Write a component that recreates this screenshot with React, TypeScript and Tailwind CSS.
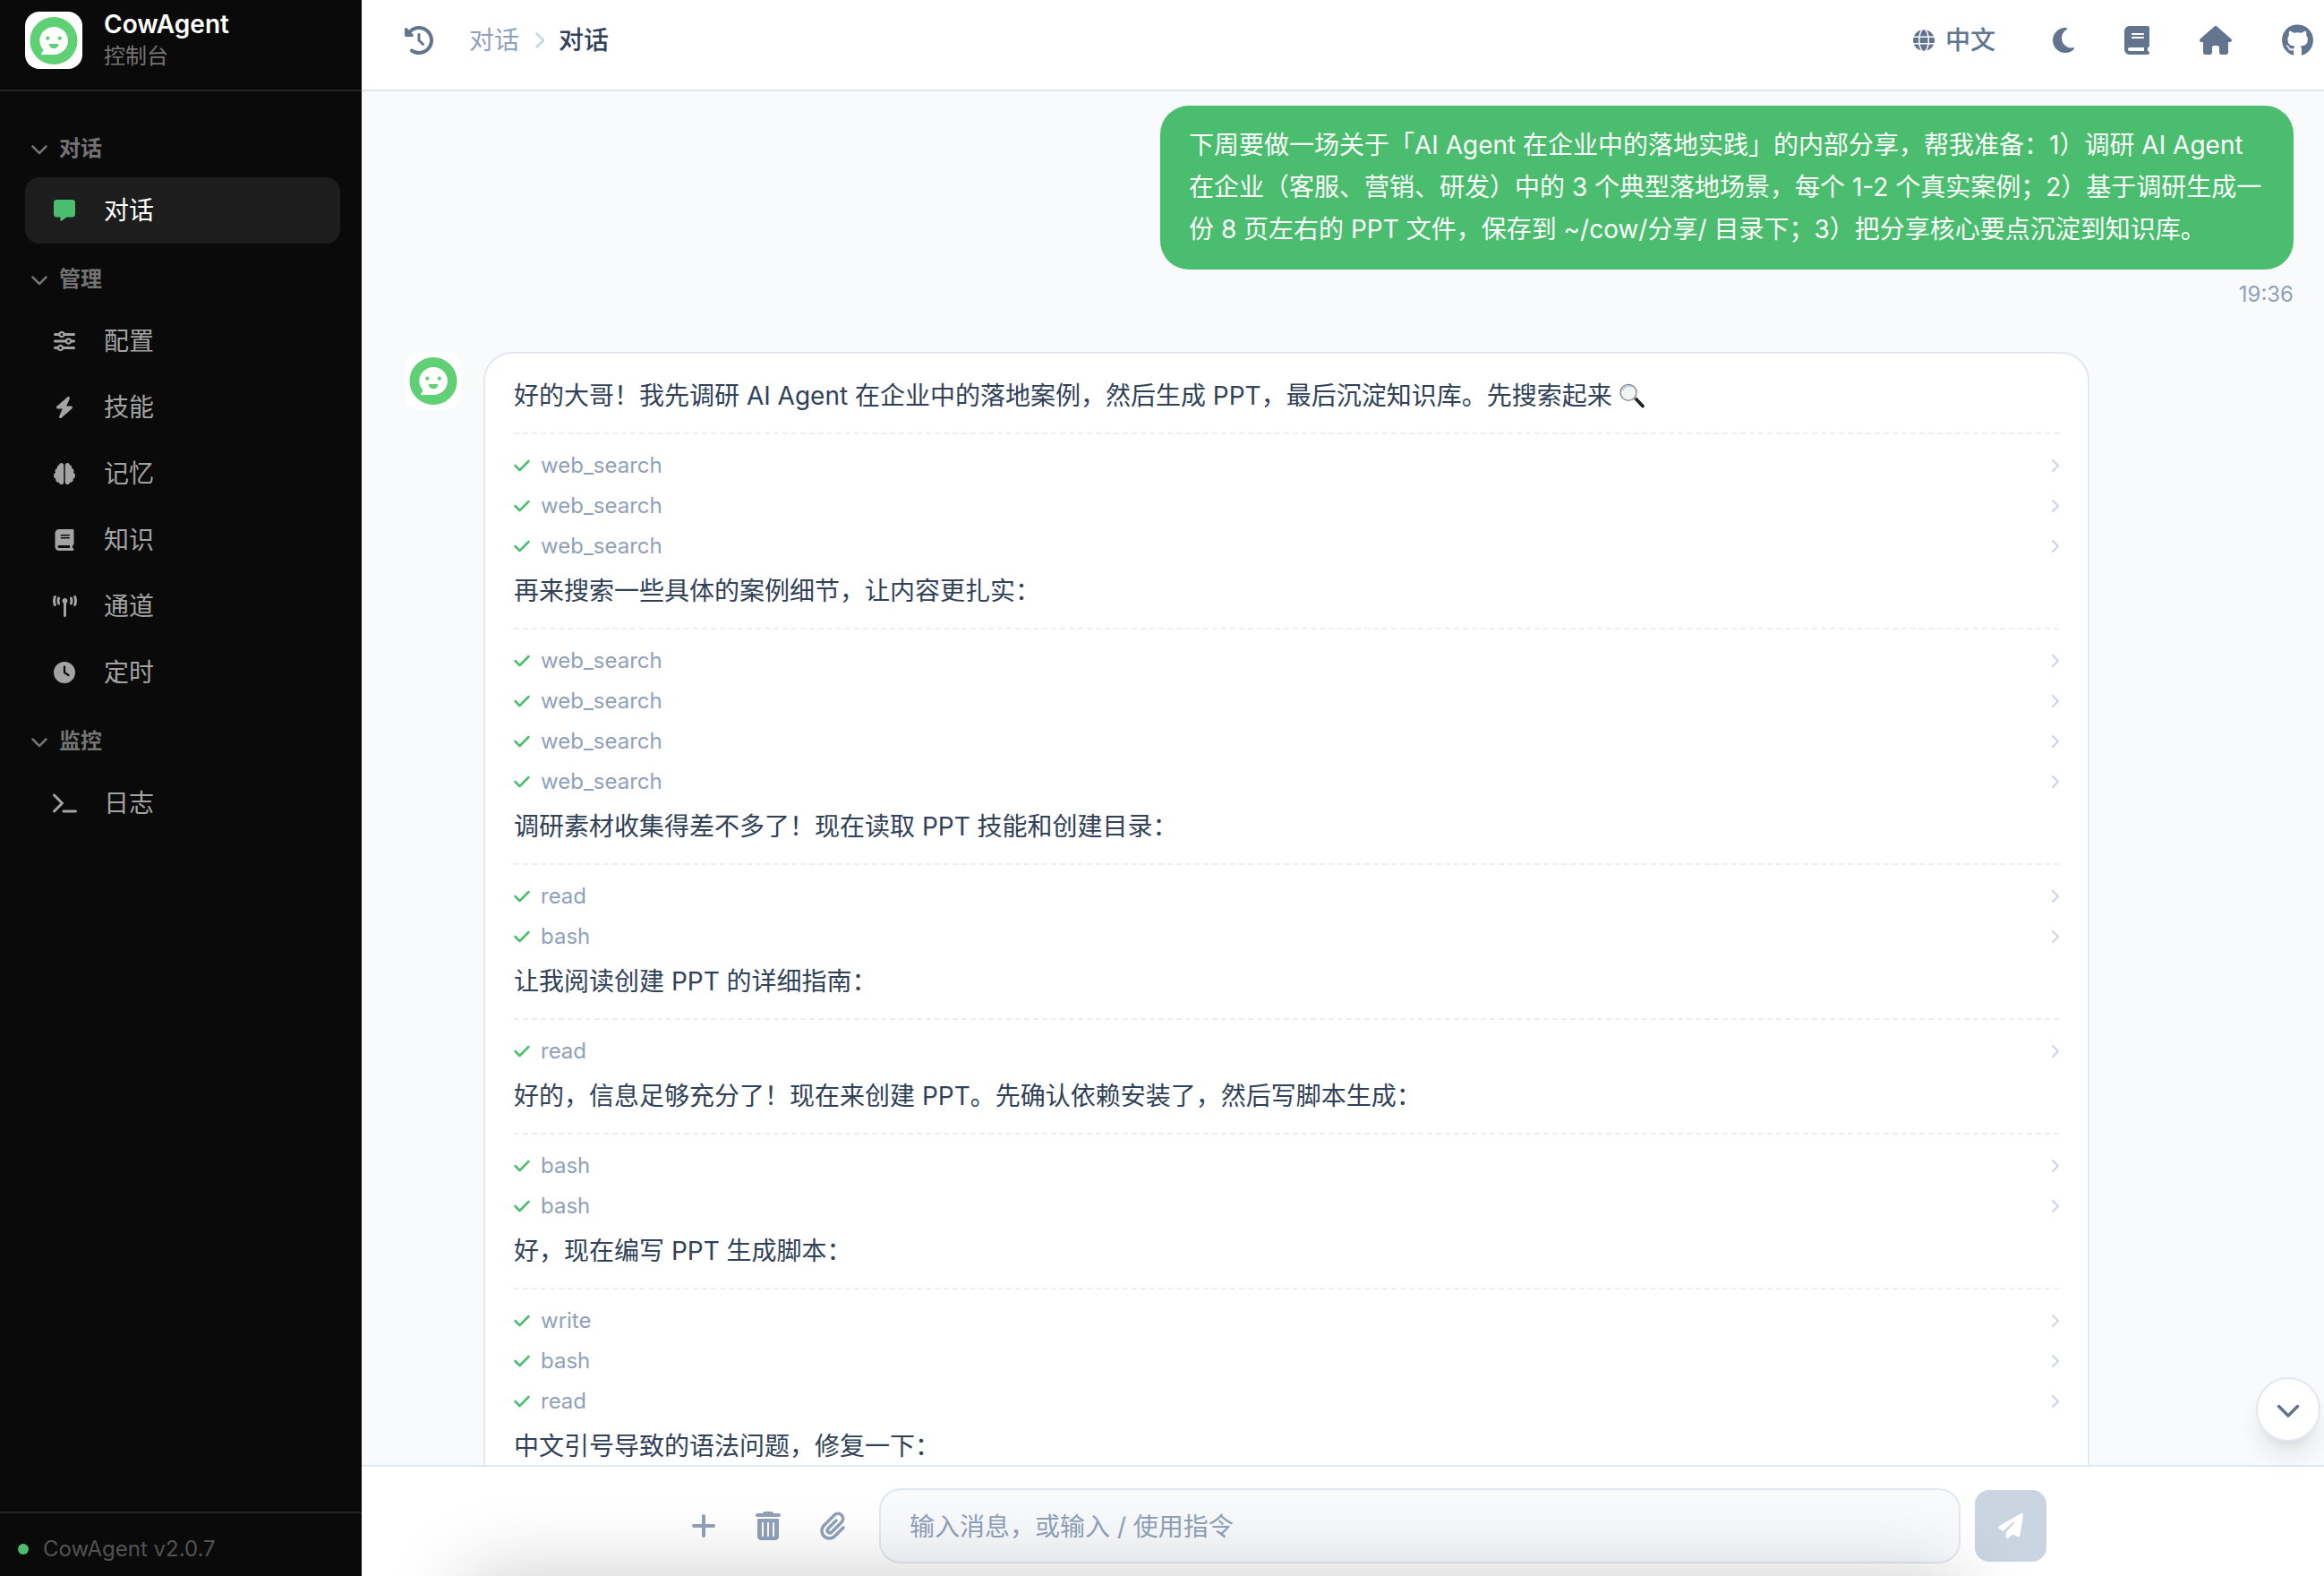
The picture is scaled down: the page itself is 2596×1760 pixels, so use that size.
import type { IconType } from 'react-icons'
import {
  FaBolt,
  FaBook,
  FaBrain,
  FaCheck,
  FaChevronDown,
  FaChevronRight,
  FaClock,
  FaClockRotateLeft,
  FaGithub,
  FaGlobe,
  FaHouse,
  FaMessage,
  FaMoon,
  FaPaperclip,
  FaPaperPlane,
  FaPlus,
  FaSliders,
  FaTerminal,
  FaTowerBroadcast,
  FaTrashCan,
} from 'react-icons/fa6'

interface NavItem {
  label: string
  icon: IconType
  wide?: boolean
  active?: boolean
}

interface NavGroup {
  title: string
  items: NavItem[]
}

const NAV: NavGroup[] = [
  { title: '对话', items: [{ label: '对话', icon: FaMessage, active: true }] },
  {
    title: '管理',
    items: [
      { label: '配置', icon: FaSliders },
      { label: '技能', icon: FaBolt },
      { label: '记忆', icon: FaBrain },
      { label: '知识', icon: FaBook },
      { label: '通道', icon: FaTowerBroadcast, wide: true },
      { label: '定时', icon: FaClock },
    ],
  },
  { title: '监控', items: [{ label: '日志', icon: FaTerminal, wide: true }] },
]

interface Step {
  text: string
  emoji?: boolean
  tools: string[]
}

const STEPS: Step[] = [
  {
    text: '好的大哥！我先调研 AI Agent 在企业中的落地案例，然后生成 PPT，最后沉淀知识库。先搜索起来',
    emoji: true,
    tools: ['web_search', 'web_search', 'web_search'],
  },
  {
    text: '再来搜索一些具体的案例细节，让内容更扎实：',
    tools: ['web_search', 'web_search', 'web_search', 'web_search'],
  },
  { text: '调研素材收集得差不多了！现在读取 PPT 技能和创建目录：', tools: ['read', 'bash'] },
  { text: '让我阅读创建 PPT 的详细指南：', tools: ['read'] },
  { text: '好的，信息足够充分了！现在来创建 PPT。先确认依赖安装了，然后写脚本生成：', tools: ['bash', 'bash'] },
  { text: '好，现在编写 PPT 生成脚本：', tools: ['write', 'bash', 'read'] },
  { text: '中文引号导致的语法问题，修复一下：', tools: [] },
]

function Logo() {
  return (
    <svg viewBox="0 0 64 64" className="size-16 shrink-0 rounded-2xl bg-white" role="img" aria-label="CowAgent">
      <circle cx="32" cy="32.5" r="26.5" fill="#5fd074" />
      <path
        d="M32.2 17c8.8 0 15.8 6.9 15.8 15.5S41 48 32.2 48H18.6c-.8 0-1-.7-.5-1.300.9-1 2-2.200 2.200-3.700.1-.6-.2-1-.6-1.500C17.600 39.200 16.300 36 16.300 32.500 16.300 23.900 23.400 17 32.200 17Z"
        fill="#fff"
      />
      <circle cx="25.300" cy="29.700" r="2.100" fill="#5fd074" />
      <circle cx="38.800" cy="29.700" r="2.100" fill="#5fd074" />
      <path d="M27.600 36h9c.6 0 .9.4.8.9-.5 2.500-2.600 4.200-5.300 4.200s-4.800-1.700-5.300-4.200c-.1-.5.200-.9.800-.9Z" fill="#5fd074" />
    </svg>
  )
}

function Magnifier() {
  return (
    <svg viewBox="0 0 28 28" className="ml-2 inline-block size-7 align-[-4px]" role="img" aria-label="🔍">
      <path d="m16.500 18 2.500-2.500 8.300 8.700c.8.8.7 1.900 0 2.600-.8.800-1.900.700-2.600-.1Z" fill="#101214" />
      <path d="m19.500 18.500 6 6.300" stroke="#4b5056" strokeWidth="0.800" strokeLinecap="round" />
      <path d="m15.200 15.800 2.400 2.400" stroke="#7a8087" strokeWidth="2" />
      <circle cx="10" cy="10.300" r="9" fill="#f3f4f6" stroke="#7c838a" strokeWidth="1.300" />
      <path d="M3.300 8a8 8 0 0 1 11-4.200" fill="none" stroke="#a3b8d0" strokeWidth="1.200" strokeLinecap="round" />
    </svg>
  )
}

function Sidebar() {
  return (
    <aside className="flex w-[404px] shrink-0 flex-col bg-[#0a0a0a]">
      <div className="flex items-center gap-6 border-b-2 border-[#262626] px-7 pt-[9px] pb-[19px]">
        <Logo />
        <div>
          <div className="text-[28px] leading-9 font-semibold text-white">CowAgent</div>
          <div className="text-2xl leading-9 text-[#737373]">控制台</div>
        </div>
      </div>

      <nav className="flex flex-1 flex-col gap-2 py-8 pr-6 pl-7">
        {NAV.map(group => (
          <div key={group.title}>
            <button className="flex w-full items-center gap-3 px-1.5 py-4 text-2xl leading-8 font-semibold text-[#737373]">
              <FaChevronDown className="size-5" />
              {group.title}
            </button>
            {group.items.map(({ label, icon: Icon, wide, active }) => (
              <a
                key={label}
                href="#"
                className={`flex items-center gap-6 rounded-2xl px-6 py-4 text-[28px] leading-[42px] ${
                  active ? 'bg-[#1d1d1d] text-white' : 'text-[#a3a3a3]'
                }`}
              >
                <span className="flex w-10 justify-center">
                  <Icon className={`h-6 ${wide ? 'w-[27px]' : 'w-6'} ${active ? 'text-[#4abe6e]' : ''}`} />
                </span>
                {label}
              </a>
            ))}
          </div>
        ))}
      </nav>

      <div className="flex items-center gap-4 border-t-2 border-[#262626] px-5 pt-5 pb-2.5 text-2xl leading-10 text-[#525252]">
        <span className="size-3 rounded-full bg-[#4abe6e]" />
        CowAgent v2.0.7
      </div>
    </aside>
  )
}

function TopBar() {
  return (
    <header className="flex items-center border-b-2 border-slate-200 bg-white pt-[9px] pr-3 pb-[19px] pl-12 text-[28px] leading-[72px] text-slate-500">
      <button aria-label="历史会话">
        <FaClockRotateLeft className="size-8" />
      </button>
      <div className="ml-10 flex flex-1 items-center gap-3">
        <span className="text-slate-400">对话</span>
        <FaChevronRight className="size-5 text-slate-300" />
        <span className="font-medium text-slate-700">对话</span>
      </div>
      <div className="flex items-center gap-14">
        <button className="flex items-center gap-3 pr-2 font-medium">
          <FaGlobe className="size-6" />
          中文
        </button>
        <button aria-label="深色模式">
          <FaMoon className="h-8 w-6" />
        </button>
        <a href="#" aria-label="文档">
          <FaBook className="h-8 w-7" />
        </a>
        <a href="#" aria-label="官网">
          <FaHouse className="h-8 w-9" />
        </a>
        <a href="#" aria-label="GitHub">
          <FaGithub className="h-9 w-[35px]" />
        </a>
      </div>
    </header>
  )
}

function ToolRow({ name }: { name: string }) {
  return (
    <button className="flex h-[45px] w-full items-center gap-3 text-2xl text-slate-400">
      <FaCheck className="h-5 w-[18px] text-[#4abe6e]" />
      <span className="flex-1 text-left">{name}</span>
      <FaChevronRight className="h-4 w-2.5 text-slate-300" />
    </button>
  )
}

function Messages() {
  return (
    <div className="h-full overflow-hidden pt-4 pr-[34px] pl-12">
      <div className="flex flex-col items-end">
        <div className="max-w-[60%] rounded-[32px] bg-[#4abe6e] px-8 py-[21px] text-[28px] leading-[47px] text-white">
          下周要做一场关于「AI Agent 在企业中的落地实践」的内部分享，帮我准备：1）调研 AI Agent
          在企业（客服、营销、研发）中的 3 个典型落地场景，每个 1-2 个真实案例；2）基于调研生成一份 8 页左右的 PPT
          文件，保存到 ~/cow/分享/ 目录下；3）把分享核心要点沉淀到知识库。
        </div>
        <time className="mt-3 text-2xl leading-8 text-slate-400">19:36</time>
      </div>

      <div className="mt-12 flex max-w-[1882px] items-start gap-6">
        <Logo />
        <div className="flex-1 rounded-[32px] border-2 border-slate-200 bg-white px-8 py-6">
          {STEPS.map(step => (
            <section key={step.text}>
              <p className="text-[28px] leading-[47px] text-slate-700">
                {step.text}
                {step.emoji && <Magnifier />}
              </p>
              {step.tools.length > 0 && (
                <div className="mt-[17px] mb-[5px] border-t-2 border-dashed border-[#eeeeee] pt-3">
                  {step.tools.map((tool, i) => (
                    <ToolRow key={i} name={tool} />
                  ))}
                </div>
              )}
            </section>
          ))}
        </div>
      </div>
    </div>
  )
}

function Composer() {
  return (
    <footer className="relative flex justify-center overflow-hidden border-t-2 border-slate-200 bg-white pt-6 pb-3.5 pl-9">
      <div className="flex w-full max-w-[1536px] items-center text-slate-400">
        <button className="flex w-[72px] justify-center" aria-label="新对话">
          <FaPlus className="size-8" />
        </button>
        <button className="flex w-[72px] justify-center" aria-label="清空">
          <FaTrashCan className="size-8" />
        </button>
        <button className="flex w-[72px] justify-center" aria-label="附件">
          <FaPaperclip className="size-8" />
        </button>
        <input
          type="text"
          aria-label="输入消息"
          placeholder="输入消息，或输入 / 使用指令"
          className="mx-4 h-[84px] min-w-0 flex-1 rounded-3xl border-2 border-slate-200 bg-slate-50 px-8 pt-0.5 text-[28px] text-slate-700 placeholder:text-slate-400"
        />
        <button className="flex size-20 items-center justify-center rounded-2xl bg-slate-300 text-white" aria-label="发送">
          <FaPaperPlane className="size-7" />
        </button>
      </div>
      <div className="pointer-events-none absolute top-full right-[406px] left-[116px] h-40 shadow-[0_0_90px_rgba(0,0,0,0.2)]" />
    </footer>
  )
}

export default function App() {
  return (
    <div className="flex h-screen overflow-hidden font-['Inter','Noto_Sans_CJK_SC',sans-serif]" lang="zh-CN">
      <Sidebar />
      <div className="flex min-w-0 flex-1 flex-col bg-slate-50">
        <TopBar />
        <main className="relative min-h-0 flex-1">
          <Messages />
          <button
            aria-label="滚动到底部"
            className="absolute right-1 bottom-[26px] z-10 flex size-[72px] items-center justify-center rounded-full border-2 border-slate-200 bg-white text-slate-500 shadow-[0_20px_30px_-6px_rgba(0,0,0,0.1),0_8px_12px_-8px_rgba(0,0,0,0.1)]"
          >
            <FaChevronDown className="size-7" />
          </button>
        </main>
        <Composer />
      </div>
    </div>
  )
}
